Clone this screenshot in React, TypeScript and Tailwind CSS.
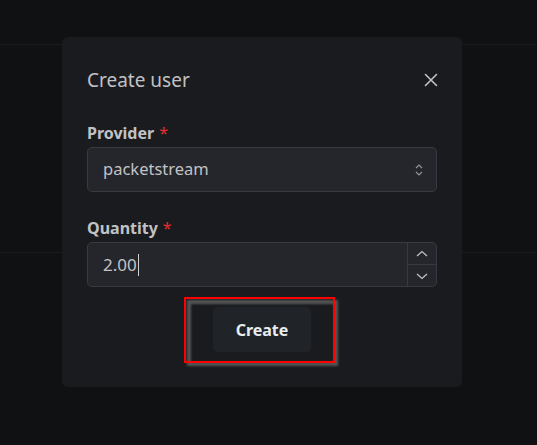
import React from "react";

export default function App() {
  const font = { fontFamily: '"Noto Sans", "Open Sans", sans-serif' };
  return (
    <div className="relative w-[537px] h-[445px] overflow-hidden bg-[#101113]" style={font}>
      {/* page behind overlay */}
      <div className="h-[45px] border-b border-[#1b1c1f]" />
      <div className="h-[208px] border-b border-[#1b1c1f]" />

      {/* modal */}
      <div className="absolute left-[62px] top-[37px] w-[400px] h-[350px] rounded-[6px] bg-[#1a1b1e] px-[25px] pt-[24px] flex flex-col">
        <div className="h-[38px] flex items-center justify-between">
          <span className="text-[19px] text-[#c1c2c5] leading-none">Create user</span>
          <svg width="14" height="14" viewBox="0 0 14 14" className="mr-[-1px]">
            <path d="M1.5 1.5 L12.5 12.5 M12.5 1.5 L1.5 12.5" stroke="#c1c2c5" strokeWidth="1.6" strokeLinecap="round" />
          </svg>
        </div>

        <div className="mt-[22px] h-[24px] flex items-center text-[16px] font-bold text-[#c1c2c5]">
          Provider<span className="ml-[5px] text-[#e03131] font-normal">*</span>
        </div>
        <div className="mt-[2px] h-[45px] rounded-[5px] border border-[#373a40] bg-[#25262b] flex items-center justify-between pl-[15px] pr-[12px]">
          <span className="text-[16.5px] text-[#c1c2c5]">packetstream</span>
          <svg width="10" height="14" viewBox="0 0 10 14">
            <path d="M2 5 L5 2 L8 5 M2 9 L5 12 L8 9" stroke="#909296" strokeWidth="1.2" fill="none" />
          </svg>
        </div>

        <div className="mt-[24px] h-[24px] flex items-center text-[16px] font-bold text-[#c1c2c5]">
          Quantity<span className="ml-[5px] text-[#e03131] font-normal">*</span>
        </div>
        <div className="mt-[2px] h-[45px] rounded-[5px] border border-[#373a40] bg-[#25262b] flex">
          <div className="flex-1 flex items-center pl-[15px]">
            <span className="text-[17px] text-[#c1c2c5]">2.00</span>
            <span className="ml-[1px] w-[1px] h-[22px] bg-[#d0d0d0]" />
          </div>
          <div className="w-[29px] border-l border-[#373a40] flex flex-col">
            <div className="flex-1 flex items-center justify-center border-b border-[#373a40]">
              <svg width="12" height="8" viewBox="0 0 12 8">
                <path d="M1 6 L6 1.5 L11 6" stroke="#c1c2c5" strokeWidth="1.3" fill="none" />
              </svg>
            </div>
            <div className="flex-1 flex items-center justify-center">
              <svg width="12" height="8" viewBox="0 0 12 8">
                <path d="M1 2 L6 6.5 L11 2" stroke="#c1c2c5" strokeWidth="1.3" fill="none" />
              </svg>
            </div>
          </div>
        </div>

        <div className="mt-[20px] flex justify-center">
          <button className="w-[98px] h-[45px] rounded-[5px] bg-[#202327] text-[16px] font-bold text-[#e9ecef]">
            Create
          </button>
        </div>
      </div>

      {/* annotation box */}
      <div className="absolute left-[187px] top-[300px] w-[151px] h-[66px] border-[4px] border-[#555] blur-[1px]" />
      <div className="absolute left-[184px] top-[297px] w-[151px] h-[66px] border-2 border-[#ff0000]" />
    </div>
  );
}
